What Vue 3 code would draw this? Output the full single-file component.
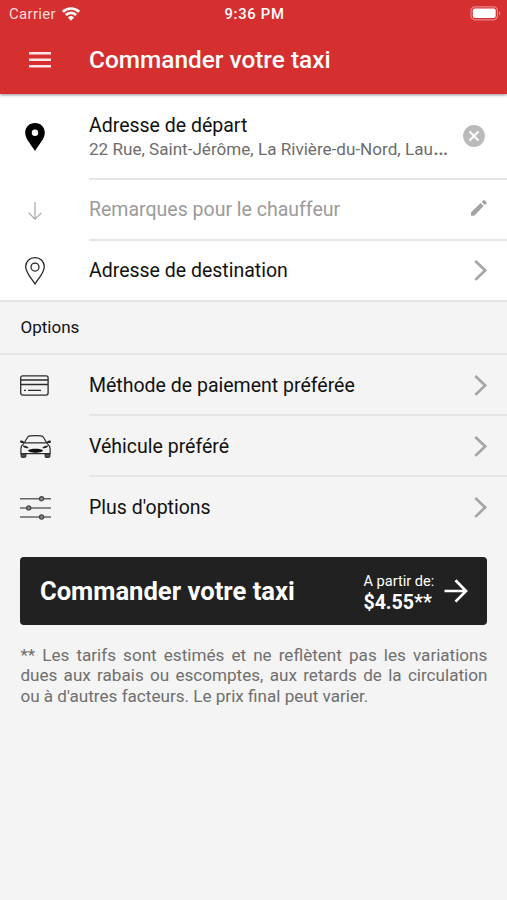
<script setup>
const options = [
  { icon: 'card', label: 'Méthode de paiement préférée', cls: 'pay' },
  { icon: 'car', label: 'Véhicule préféré', cls: 'vehicle' },
  { icon: 'sliders', label: "Plus d'options", cls: 'more' },
]
</script>

<template>
  <main class="screen">
    <header class="top">
      <div class="status">
        <div class="carrier">
          <span>Carrier</span>
          <svg width="18" height="14" viewBox="0 0 18 14" fill="none" stroke="#fff" stroke-width="2.7">
            <path d="M.9 4.8a11.6 11.6 0 0 1 16.2 0" />
            <path d="M3.8 8a7.4 7.4 0 0 1 10.4 0" />
            <path d="M9 13.7 5.9 10.5a4.500 4.500 0 0 1 6.200 0z" fill="#fff" stroke="none" />
          </svg>
        </div>
        <span class="time">9:36 PM</span>
        <svg class="battery" width="31" height="15" viewBox="0 0 31 15">
          <rect x="1" y=".8" width="26.500" height="13" rx="4" fill="none" stroke="#e78686" stroke-width="1.200" />
          <rect x="2.800" y="2.500" width="22.900" height="9.600" rx="2" fill="#fff" />
          <path d="M29 5.200c1.800.8 1.800 3.400 0 4.200z" fill="#e78686" />
        </svg>
      </div>
      <div class="bar">
        <svg class="menu" width="22" height="16" viewBox="0 0 22 16" fill="#fde4e4">
          <path d="M0 0h22v2.600H0zM0 6.500h22v2.600H0zM0 13h22v2.600H0z" />
        </svg>
        <h1>Commander votre taxi</h1>
      </div>
    </header>

    <section class="addresses">
      <div class="row first">
        <div class="icon">
          <svg width="20" height="28" viewBox="0 0 20 28">
            <path d="M10 0C4.300 0 .2 4.200.2 9.700c0 6 5.700 11.600 9.800 18.200 4.100-6.600 9.800-12.200 9.800-18.200C19.800 4.200 15.700 0 10 0zm0 6.500a3.200 3.200 0 1 1 0 6.400 3.200 3.200 0 0 1 0-6.400z" fill="#000" fill-rule="evenodd" />
          </svg>
        </div>
        <div class="body line">
          <div class="texts">
            <div class="label depart">Adresse de départ</div>
            <div class="address">22 Rue, Saint-Jérôme, La Rivière-du-Nord, Lau<span class="dots">…</span></div>
          </div>
          <svg class="clear" width="22" height="22" viewBox="0 0 22 22">
            <circle cx="11" cy="11" r="10.900" fill="#bababa" />
            <path d="M6.500 6.500l9 9M15.500 6.500l-9 9" stroke="#fff" stroke-width="2.200" />
          </svg>
        </div>
      </div>
      <div class="row">
        <div class="icon">
          <svg width="14" height="18" viewBox="0 0 14 18" fill="none" stroke="#a5a5a5" stroke-width="1.200">
            <path d="M7 0v17M.7 10.900 7 17.100l6.300-6.200" />
          </svg>
        </div>
        <div class="body line">
          <div class="label remark">Remarques pour le chauffeur</div>
          <svg class="pencil" width="16" height="16" viewBox="0 0 16 16" fill="#a3a3a3">
            <path d="M0 12.500 9.600 3l3.100 3.100L3.200 15.700H0zM10.700 1.900 12.200.4c.5-.5 1.100-.5 1.600 0l1.600 1.600c.4.500.4 1.100 0 1.500L13.800 5z" />
          </svg>
        </div>
      </div>
      <div class="row last">
        <div class="icon">
          <svg width="20" height="28" viewBox="0 0 20 28" fill="none" stroke="#222" stroke-width="1.250">
            <path d="M10 .7C4.600.7.700 4.600.700 9.700c0 5.800 5.200 10.900 9.300 17.300 4.100-6.400 9.300-11.500 9.300-17.300C19.300 4.600 15.400.7 10 .7z" />
            <circle cx="10" cy="10" r="4" />
          </svg>
        </div>
        <div class="body">
          <div class="label dest">Adresse de destination</div>
          <svg class="chev" width="13" height="21" viewBox="0 0 13 21"><path d="M1.300 1l9.800 9.400-9.800 9.500" /></svg>
        </div>
      </div>
    </section>

    <h2>Options</h2>

    <section class="options">
      <div v-for="(o, i) in options" :key="o.icon" class="row">
        <div class="icon">
          <svg v-if="o.icon === 'card'" width="29" height="21" viewBox="0 0 29 21" fill="none" stroke="#2b2b2b" stroke-width="1.300">
            <rect x=".7" y=".8" width="27.400" height="19.300" rx="2" />
            <path d="M.7 5h27.400M.7 9.500h27.400M4 15.300h2M8 15.300h13" />
          </svg>
          <svg v-else-if="o.icon === 'car'" width="31" height="23" viewBox="0 0 31 23" fill="none" stroke="#2b2b2b" stroke-width="1.200">
            <path d="M4.300 7.700 7.400 2.500C8 1.400 9 1 10.200.9a58 58 0 0 1 10.600 0c1.200.1 2.200.5 2.800 1.600l3.100 5.200M4.300 7.900h22.400M4.300 7.900C2 9.900.9 11.500.9 13.700v5h29.200v-5c0-2.200-1.100-3.800-3.400-5.800" />
            <path d="M0 6c1.600-1 3.600-.5 4.300 1.900H.7zM31 6c-1.600-1-3.600-.5-4.300 1.900h3.600z" fill="#222" stroke="none" />
            <path d="M2.500 10.400c2.600-.1 4.900.7 6.400 2.500-2.900.6-5.200.1-6.400-2.500zM28.500 10.400c-2.600-.1-4.900.7-6.400 2.500 2.900.6 5.200.1 6.400-2.500z" fill="#222" stroke="none" />
            <path d="M8 15.500c1.500-2.500 13.500-2.500 15 0-1 2.900-14 2.900-15 0z" fill="#111" stroke="none" />
            <path d="M1.200 18.800h4.600v2.800c0 1-4.300 1-4.600 0zM25.200 18.800h4.600v2.800c-.3 1-4.600 1-4.600 0z" fill="#555" />
          </svg>
          <svg v-else width="31" height="24" viewBox="0 0 31 24" fill="none" stroke="#666" stroke-width="1.500">
            <path d="M0 2.700h19.300M24 2.700h7M0 11.900h6.300M11 11.900h20M0 21h19.300M24 21h7" />
            <g fill="#888" stroke="#444" stroke-width="1.200">
              <circle cx="21.600" cy="2.700" r="2.100" /><circle cx="8.700" cy="11.900" r="2.100" /><circle cx="21.600" cy="21" r="2.100" />
            </g>
          </svg>
        </div>
        <div class="body" :class="{ line: i < options.length - 1 }">
          <div class="label" :class="o.cls">{{ o.label }}</div>
          <svg class="chev" width="13" height="21" viewBox="0 0 13 21"><path d="M1.300 1l9.800 9.400-9.800 9.500" /></svg>
        </div>
      </div>
    </section>

    <button class="order">
      <span class="cta">Commander votre taxi</span>
      <span class="price">
        <span class="from">A partir de:</span>
        <strong>$4.55**</strong>
      </span>
      <svg width="24" height="24" viewBox="0 0 24 24" fill="none" stroke="#fff" stroke-width="2.700">
        <path d="M.5 12h21M11.500 1.200 22 12 11.500 22.600" />
      </svg>
    </button>

    <p class="note">** Les tarifs sont estimés et ne reflètent pas les variations dues aux rabais ou escomptes, aux retards de la circulation ou à d'autres facteurs. Le prix final peut varier.</p>
  </main>
</template>

<style>
body { margin: 0; background: #f4f4f4; }
</style>

<style scoped>
* { box-sizing: border-box; }
.screen { width: 507px; height: 900px; overflow: hidden; background: #f4f4f4; font-family: Roboto, sans-serif; color: #111; }
svg { display: block; flex: none; }
.top { position: relative; height: 94px; background: #d52f2f; color: #fff; box-shadow: 0 1px 3px rgba(0, 0, 0, .45); }
.status { display: grid; grid-template-columns: 1fr auto 1fr; align-items: center; height: 27px; padding: 0 6px 0 9px; }
.carrier { display: flex; align-items: center; gap: 6px; font-size: 15px; letter-spacing: .3px; color: #fbdcdc; }
.time { font-size: 14.800px; font-weight: 500; letter-spacing: .7px; padding-top: 1px; margin-right: 1px; }
.battery { justify-self: end; }
.bar { display: flex; align-items: center; height: 66px; padding-left: 29px; }
h1 { margin: 0 0 0 38px; font-size: 24.400px; font-weight: 500; line-height: 30px; white-space: nowrap; }
.addresses { background: #fff; border-bottom: 2px solid #e6e6e6; height: 208px; }
.row { display: flex; height: 61px; }
.first { height: 86px; }
.icon { width: 89px; padding-left: 20px; display: flex; align-items: center; flex: none; }
.addresses .icon { padding: 0; width: 70px; margin-right: 19px; justify-content: center; }
.addresses .last { height: 60px; }
.body { flex: 1; min-width: 0; display: flex; align-items: center; justify-content: space-between; padding-right: 20px; }
.first .body { padding-top: 1px; }
.options .body { padding-top: 1px; }
.options .row:last-child .body { padding-top: 0; }
.line { border-bottom: 2px solid #e5e5e5; }
.label { font-size: 19.500px; line-height: 24px; color: #111; white-space: nowrap; }
.depart, .pay, .vehicle { padding-top: 2px; }
.texts { width: 366px; }
.address { font-size: 17.100px; line-height: 23px; height: 24px; color: #6d6d6d; white-space: nowrap; }
.dots { font-size: 23px; line-height: 1px; }
.clear { margin: 0 2px 2px 0; }
.pencil { margin-bottom: 3px; }
.label.remark { color: #9b9b9b; }
.chev { fill: none; stroke: #a5a5a5; stroke-width: 2.700; }
.last .chev { margin-bottom: 1px; }
h2 { margin: 0; height: 53px; padding-left: 20.500px; border-bottom: 2px solid #e5e5e5; font-size: 17px; line-height: 51px; font-weight: 400; }
.order { display: flex; align-items: center; width: 467px; height: 68px; margin: 19px 0 0 20.400px; padding: 0 19.500px; border: 0; border-radius: 4px; background: #212121; color: #fff; font-family: inherit; text-align: left; }
.cta { font-size: 25.600px; font-weight: 700; white-space: nowrap; }
.price { display: flex; flex-direction: column; margin-left: auto; margin-right: 8.500px; width: 72px; padding-top: 3px; white-space: nowrap; }
.from { font-size: 14.600px; line-height: 20px; }
.price strong { font-size: 19.600px; line-height: 23px; font-weight: 700; }
.note { width: 467px; margin: 19.600px 0 0 20.400px; font-size: 17.100px; line-height: 20.800px; color: #6f6f6f; text-align: justify; }
</style>
